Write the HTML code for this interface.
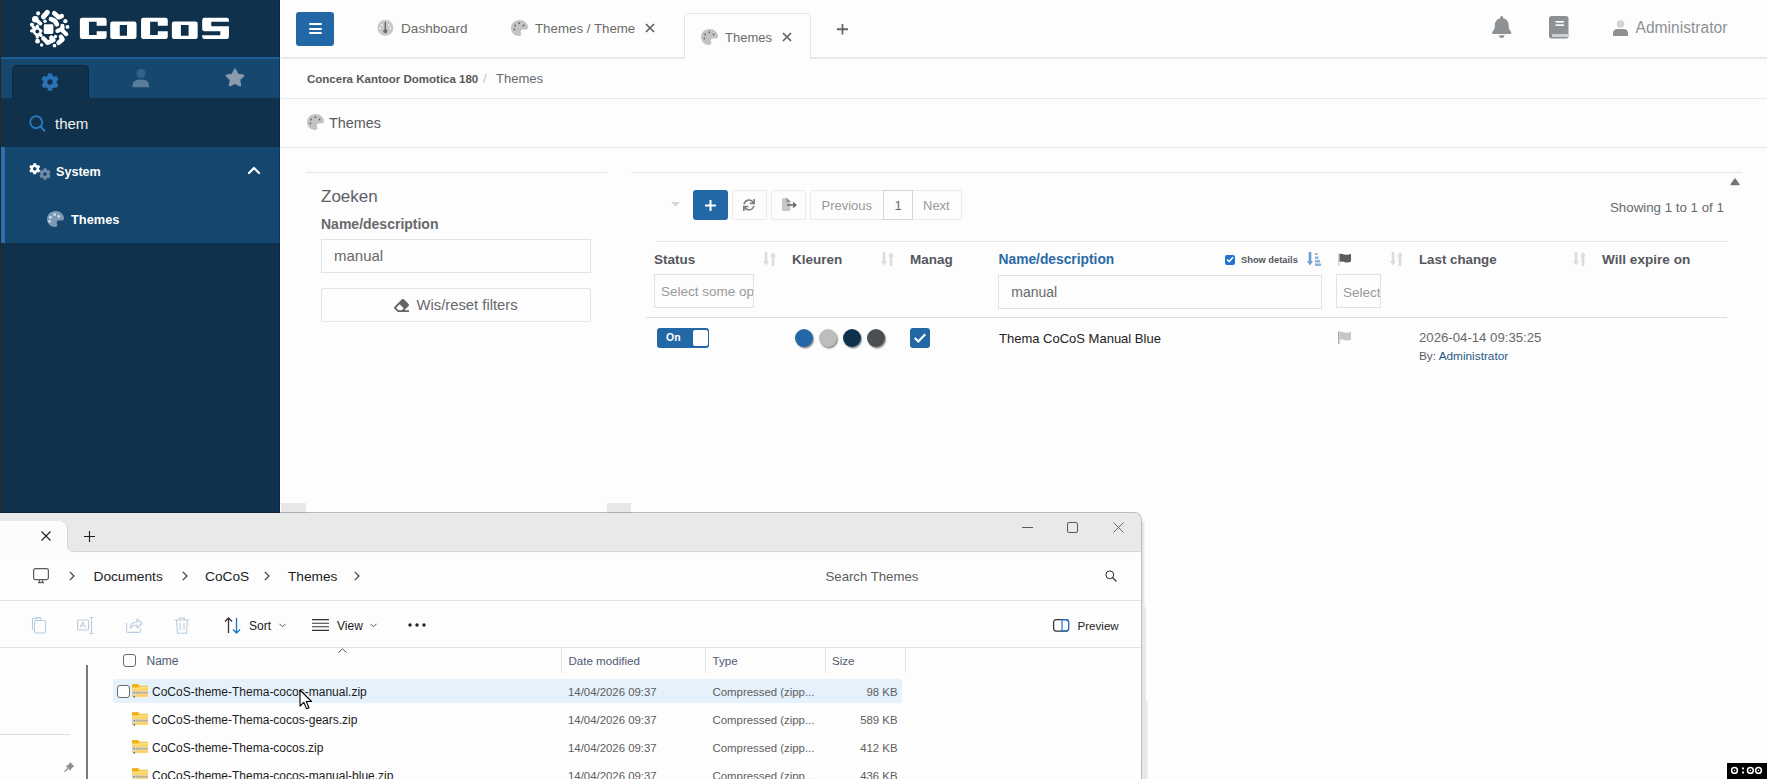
<!DOCTYPE html>
<html><head><meta charset="utf-8">
<style>
*{box-sizing:border-box;margin:0;padding:0}
html,body{width:1767px;height:779px;overflow:hidden;background:#fdfdfd;font-family:"Liberation Sans",sans-serif;position:relative}
.a{position:absolute}
.t{position:absolute;line-height:1;white-space:nowrap}
svg{position:absolute;overflow:visible}
</style></head><body>

<!-- ================= SIDEBAR ================= -->
<div class="a" style="left:0;top:0;width:280px;height:513px;background:#10314c"></div>
<div class="a" style="left:0;top:0;width:1px;height:513px;background:#2b2620"></div>
<!-- blue line + tab bar -->
<div class="a" style="left:1px;top:57px;width:279px;height:2px;background:#1f5f98"></div>
<div class="a" style="left:1px;top:59px;width:279px;height:39px;background:#15476f"></div>
<div class="a" style="left:12px;top:65px;width:77px;height:33px;background:#10314c;border-radius:5px 5px 0 0;border:1px solid #0c2740;border-bottom:none"></div>
<!-- menu area -->
<div class="a" style="left:1px;top:147px;width:279px;height:96px;background:#15466e"></div>
<div class="a" style="left:1px;top:147px;width:4px;height:96px;background:#2a6fb0"></div>


<!-- logo -->
<svg style="left:0;top:0" width="280" height="57">
 <g transform="translate(24,6) scale(0.0565)" fill="#fff" stroke="#fff" stroke-linecap="round" stroke-linejoin="round">
  <rect x="350" y="325" width="170" height="170" rx="24" stroke="none"/>
  <circle cx="250" cy="130" r="36" stroke="none"/>
  <line x1="345" y1="190" x2="412" y2="112" stroke-width="90"/>
  <path d="M535 128 L615 200 L668 178" fill="none" stroke-width="80"/>
  <circle cx="200" cy="235" r="58" stroke="none"/>
  <line x1="210" y1="240" x2="292" y2="312" stroke-width="66"/>
  <circle cx="372" cy="270" r="30" stroke="none"/>
  <path d="M478 232 L545 262 L582 322" fill="none" stroke-width="84"/>
  <circle cx="732" cy="268" r="37" stroke="none"/>
  <circle cx="140" cy="332" r="37" stroke="none"/>
  <circle cx="770" cy="370" r="34" stroke="none"/>
  <circle cx="235" cy="450" r="76" stroke="none"/>
  <path d="M135 440 L300 440 M235 355 L235 550 M165 375 L300 520" fill="none" stroke-width="58"/>
  <path d="M592 440 L680 402 M680 350 L680 432 L748 498" fill="none" stroke-width="74"/>
  <path d="M342 572 L420 652 L522 602 L482 560" fill="none" stroke-width="78"/>
  <circle cx="556" cy="540" r="30" stroke="none"/>
  <path d="M655 545 L682 592 L612 652" fill="none" stroke-width="80"/>
  <circle cx="240" cy="622" r="42" stroke="none"/>
  <circle cx="312" cy="690" r="30" stroke="none"/>
  <circle cx="540" cy="702" r="32" stroke="none"/>
 </g>
 <circle cx="37.3" cy="31.5" r="1.9" fill="#10314c"/>
 <g transform="translate(74,10) scale(0.0906)" fill="#fff" fill-rule="evenodd">
  <path d="M90 85 H335 Q360 85 360 110 V175 H250 V130 H165 V275 H250 V235 H360 V295 Q360 320 335 320 H90 Q65 320 65 295 V110 Q65 85 90 85 Z"/>
  <path d="M425 128 H665 Q690 128 690 153 V295 Q690 320 665 320 H425 Q400 320 400 295 V153 Q400 128 425 128 Z M505 165 V285 H585 V165 Z"/>
  <path d="M765 85 H1010 Q1035 85 1035 110 V175 H925 V130 H840 V275 H925 V235 H1035 V295 Q1035 320 1010 320 H765 Q740 320 740 295 V110 Q740 85 765 85 Z"/>
  <path d="M1105 128 H1340 Q1365 128 1365 153 V295 Q1365 320 1340 320 H1105 Q1080 320 1080 295 V153 Q1080 128 1105 128 Z M1180 165 V285 H1265 V165 Z"/>
  <path d="M1440 85 H1685 Q1710 85 1710 110 V130 H1515 V180 H1710 V295 Q1710 320 1685 320 H1440 Q1415 320 1415 295 V278 H1615 V235 H1440 Q1415 235 1415 210 V110 Q1415 85 1440 85 Z"/>
 </g>
</svg>
<!-- tab icons -->
<svg style="left:41px;top:73px" width="18" height="18" viewBox="0 0 512 512"><path fill="#2a72b5" d="M487.4 315.7l-42.6-24.6c4.3-23.2 4.3-47 0-70.2l42.6-24.6c4.9-2.8 7.1-8.6 5.5-14-11.1-35.6-30-67.8-54.7-94.6-3.8-4.1-10-5.1-14.8-2.3L380.8 110c-17.9-15.4-38.5-27.3-60.8-35.1V25.8c0-5.6-3.9-10.5-9.4-11.7-36.7-8.2-74.3-7.8-109.2 0-5.5 1.2-9.4 6.1-9.4 11.7V75c-22.2 7.9-42.8 19.8-60.8 35.1L88.7 85.5c-4.9-2.8-11-1.9-14.8 2.3-24.7 26.7-43.6 58.9-54.7 94.6-1.7 5.4.6 11.2 5.5 14L67.3 221c-4.3 23.2-4.3 47 0 70.2l-42.6 24.6c-4.9 2.8-7.1 8.6-5.5 14 11.1 35.6 30 67.8 54.7 94.6 3.8 4.1 10 5.1 14.8 2.3l42.6-24.6c17.9 15.4 38.5 27.3 60.8 35.1v49.2c0 5.6 3.9 10.5 9.4 11.7 36.7 8.2 74.3 7.8 109.2 0 5.5-1.2 9.4-6.1 9.4-11.7v-49.2c22.2-7.9 42.8-19.8 60.8-35.1l42.6 24.6c4.9 2.8 11 1.9 14.8-2.3 24.7-26.7 43.6-58.9 54.7-94.6 1.5-5.5-.7-11.3-5.6-14.1zM256 336c-44.1 0-80-35.9-80-80s35.9-80 80-80 80 35.9 80 80-35.9 80-80 80z"/></svg>
<svg style="left:132px;top:69px" width="17" height="19" viewBox="0 0 17 19"><circle cx="9" cy="4.5" r="4.6" fill="#33618a"/><path d="M0.5 18.3 V16.5 Q0.5 10.6 9 10.6 Q17 10.6 17 16.5 V18.3 Z" fill="#5b7d9a"/></svg>
<svg style="left:225px;top:68px" width="20" height="19" viewBox="0 0 576 512"><path fill="#8a9bb0" d="M259.3 17.8L194 150.2 47.9 171.5c-26.2 3.8-36.7 36.1-17.7 54.6l105.7 103-25 145.5c-4.5 26.1 23 46 46.4 33.7L288 439.6l130.7 68.7c23.4 12.2 50.9-7.6 46.4-33.7l-25-145.5 105.7-103c19-18.5 8.5-50.8-17.7-54.6L382 150.2 316.7 17.8c-11.7-23.6-45.6-23.9-57.4 0z"/></svg>
<!-- search -->
<svg style="left:28px;top:115px" width="18" height="18"><circle cx="8.2" cy="7.2" r="6" fill="none" stroke="#2a78c0" stroke-width="1.9"/><line x1="12.5" y1="11.5" x2="16.5" y2="15.8" stroke="#2a78c0" stroke-width="2.1" stroke-linecap="round"/></svg>
<div class="t" style="left:55px;top:116px;font-size:15px;color:#f2f2f2">them</div>
<!-- System -->
<svg style="left:29.3px;top:162.8px" width="11.5" height="11.5" viewBox="0 0 512 512"><path fill="#fff" d="M487.4 315.7l-42.6-24.6c4.3-23.2 4.3-47 0-70.2l42.6-24.6c4.9-2.8 7.1-8.6 5.5-14-11.1-35.6-30-67.8-54.7-94.6-3.8-4.1-10-5.1-14.8-2.3L380.8 110c-17.9-15.4-38.5-27.3-60.8-35.1V25.8c0-5.6-3.9-10.5-9.4-11.7-36.7-8.2-74.3-7.8-109.2 0-5.5 1.2-9.4 6.1-9.4 11.7V75c-22.2 7.9-42.8 19.8-60.8 35.1L88.7 85.5c-4.9-2.8-11-1.9-14.8 2.3-24.7 26.7-43.6 58.9-54.7 94.6-1.7 5.4.6 11.2 5.5 14L67.3 221c-4.3 23.2-4.3 47 0 70.2l-42.6 24.6c-4.9 2.8-7.1 8.6-5.5 14 11.1 35.6 30 67.8 54.7 94.6 3.8 4.1 10 5.1 14.8 2.3l42.6-24.6c17.9 15.4 38.5 27.3 60.8 35.1v49.2c0 5.6 3.9 10.5 9.4 11.7 36.7 8.2 74.3 7.8 109.2 0 5.5-1.2 9.4-6.1 9.4-11.7v-49.2c22.2-7.9 42.8-19.8 60.8-35.1l42.6 24.6c4.9 2.8 11 1.9 14.8-2.3 24.7-26.7 43.6-58.9 54.7-94.6 1.5-5.5-.7-11.3-5.6-14.1zM256 336c-44.1 0-80-35.9-80-80s35.9-80 80-80 80 35.9 80 80-35.9 80-80 80z"/></svg>
<svg style="left:39px;top:168px" width="12" height="12" viewBox="0 0 512 512"><path fill="#6f8ba5" d="M487.4 315.7l-42.6-24.6c4.3-23.2 4.3-47 0-70.2l42.6-24.6c4.9-2.8 7.1-8.6 5.5-14-11.1-35.6-30-67.8-54.7-94.6-3.8-4.1-10-5.1-14.8-2.3L380.8 110c-17.9-15.4-38.5-27.3-60.8-35.1V25.8c0-5.6-3.9-10.5-9.4-11.7-36.7-8.2-74.3-7.8-109.2 0-5.5 1.2-9.4 6.1-9.4 11.7V75c-22.2 7.9-42.8 19.8-60.8 35.1L88.7 85.5c-4.9-2.8-11-1.9-14.8 2.3-24.7 26.7-43.6 58.9-54.7 94.6-1.7 5.4.6 11.2 5.5 14L67.3 221c-4.3 23.2-4.3 47 0 70.2l-42.6 24.6c-4.9 2.8-7.1 8.6-5.5 14 11.1 35.6 30 67.8 54.7 94.6 3.8 4.1 10 5.1 14.8 2.3l42.6-24.6c17.9 15.4 38.5 27.3 60.8 35.1v49.2c0 5.6 3.9 10.5 9.4 11.7 36.7 8.2 74.3 7.8 109.2 0 5.5-1.2 9.4-6.1 9.4-11.7v-49.2c22.2-7.9 42.8-19.8 60.8-35.1l42.6 24.6c4.9 2.8 11 1.9 14.8-2.3 24.7-26.7 43.6-58.9 54.7-94.6 1.5-5.5-.7-11.3-5.6-14.1zM256 336c-44.1 0-80-35.9-80-80s35.9-80 80-80 80 35.9 80 80-35.9 80-80 80z"/></svg>
<div class="t" style="left:56px;top:166.3px;font-size:12.6px;font-weight:bold;color:#fff">System</div>
<svg style="left:247px;top:165px" width="14" height="10"><path d="M2 8 L7 3 L12 8" fill="none" stroke="#fff" stroke-width="2.2" stroke-linecap="round" stroke-linejoin="round"/></svg>
<!-- Themes menu item -->
<svg style="left:47px;top:210.5px" width="17" height="16" viewBox="0 0 17 16"><path fill="#7d9ab5" d="M8.5 0 C13.3 0 17 3.3 17 7.2 C17 9 15.6 9.6 14.2 9.6 L11.6 9.6 C10.2 9.6 9.4 11 9.9 12.2 C10.4 13.3 10.6 14.1 10 15 C9.5 15.8 8.8 16 8.2 16 C3.6 16 0 12.5 0 8 C0 3.6 3.8 0 8.5 0 Z"/><circle cx="2.6" cy="10.3" r="1.3" fill="#d9e2ea"/><circle cx="3.4" cy="6.2" r="1.3" fill="#d9e2ea"/><circle cx="7.6" cy="3.6" r="1.3" fill="#d9e2ea"/><circle cx="11.8" cy="5.4" r="1.3" fill="#d9e2ea"/></svg>
<div class="t" style="left:71px;top:213.8px;font-size:12.8px;font-weight:bold;color:#fff">Themes</div>

<!-- ================= MAIN ================= -->
<div class="a" style="left:280px;top:0;width:1px;height:513px;background:#fefefe"></div><div class="a" style="left:279px;top:0;width:1px;height:513px;background:rgba(0,30,70,.35)"></div>
<div class="a" style="left:281px;top:57px;width:1486px;height:2px;background:#e7e8e9"></div>
<div class="a" style="left:281px;top:98px;width:1486px;height:1px;background:#e8e9e9"></div>
<div class="a" style="left:281px;top:147px;width:1486px;height:1px;background:#e8e8e8"></div>


<!-- hamburger -->
<div class="a" style="left:296px;top:12px;width:38px;height:34px;background:#2268a6;border-radius:3px"></div>
<div class="a" style="left:308.5px;top:23.2px;width:13px;height:2.1px;background:#fff;border-radius:1px"></div>
<div class="a" style="left:308.5px;top:27.5px;width:13px;height:2.1px;background:#fff;border-radius:1px"></div>
<div class="a" style="left:308.5px;top:31.8px;width:13px;height:2.1px;background:#fff;border-radius:1px"></div>
<!-- dashboard tab -->
<svg style="left:377px;top:20px" width="17" height="17"><circle cx="8.4" cy="7.8" r="8" fill="#c8c8c8"/><rect x="7.6" y="2" width="1.4" height="9" fill="#6a6a6a"/><circle cx="8.3" cy="11.2" r="2" fill="#6a6a6a"/><rect x="4" y="4.5" width="1.5" height="1.3" fill="#fff"/><rect x="11" y="4.5" width="1.5" height="1.3" fill="#fff"/><rect x="2.6" y="7.5" width="1.4" height="1.6" fill="#fff"/><rect x="12.6" y="7.5" width="1.4" height="1.6" fill="#fff"/></svg>
<div class="t" style="left:401px;top:22.2px;font-size:13.6px;color:#6b6b6b">Dashboard</div>
<!-- themes/theme tab -->
<svg style="left:511px;top:20px" width="17" height="16" viewBox="0 0 17 16"><path fill="#c3c3c3" d="M8.5 0 C13.3 0 17 3.3 17 7.2 C17 9 15.6 9.6 14.2 9.6 L11.6 9.6 C10.2 9.6 9.4 11 9.9 12.2 C10.4 13.3 10.6 14.1 10 15 C9.5 15.8 8.8 16 8.2 16 C3.6 16 0 12.5 0 8 C0 3.6 3.8 0 8.5 0 Z"/><ellipse cx="8.4" cy="3.3" rx="0.75" ry="0.95" fill="#55575c"/><ellipse cx="4.1" cy="5.5" rx="0.75" ry="0.95" fill="#55575c"/><ellipse cx="12.6" cy="5.5" rx="0.75" ry="0.95" fill="#55575c"/><ellipse cx="3.3" cy="9.4" rx="0.75" ry="0.95" fill="#55575c"/></svg>
<div class="t" style="left:535px;top:21.8px;font-size:13.3px;color:#6b6b6b">Themes / Theme</div>
<svg style="left:644.5px;top:23px" width="10" height="10"><path d="M1 1 L9 9 M9 1 L1 9" stroke="#5f6063" stroke-width="1.7"/></svg>
<!-- active tab -->
<div class="a" style="left:684px;top:13px;width:127px;height:46px;background:#fdfdfd;border:1px solid #e3e5e7;border-bottom:none;border-radius:5px 5px 0 0"></div>
<svg style="left:701px;top:29px" width="17" height="16" viewBox="0 0 17 16"><path fill="#c3c3c3" d="M8.5 0 C13.3 0 17 3.3 17 7.2 C17 9 15.6 9.6 14.2 9.6 L11.6 9.6 C10.2 9.6 9.4 11 9.9 12.2 C10.4 13.3 10.6 14.1 10 15 C9.5 15.8 8.8 16 8.2 16 C3.6 16 0 12.5 0 8 C0 3.6 3.8 0 8.5 0 Z"/><ellipse cx="8.4" cy="3.3" rx="0.75" ry="0.95" fill="#55575c"/><ellipse cx="4.1" cy="5.5" rx="0.75" ry="0.95" fill="#55575c"/><ellipse cx="12.6" cy="5.5" rx="0.75" ry="0.95" fill="#55575c"/><ellipse cx="3.3" cy="9.4" rx="0.75" ry="0.95" fill="#55575c"/></svg>
<div class="t" style="left:725px;top:30.8px;font-size:13px;color:#6b6b6b">Themes</div>
<svg style="left:781.6px;top:31.5px" width="10" height="10"><path d="M1 1 L9 9 M9 1 L1 9" stroke="#5f6063" stroke-width="1.7"/></svg>
<svg style="left:837px;top:23.8px" width="11" height="10.5"><path d="M5.5 0 V10.5 M0 5.25 H11" stroke="#666" stroke-width="1.8"/></svg>
<!-- right icons -->
<svg style="left:1492px;top:15.5px" width="19.5" height="22" viewBox="0 0 448 512"><path fill="#8e9193" d="M224 512c35.32 0 63.97-28.65 63.97-64H160.03c0 35.35 28.65 64 63.97 64zm215.39-149.71c-19.32-20.76-55.47-51.99-55.47-154.29 0-77.7-54.480-139.9-127.94-155.16V32c0-17.67-14.32-32-31.98-32s-31.98 14.33-31.98 32v20.84C118.560 68.1 64.08 130.3 64.08 208c0 102.3-36.15 133.53-55.47 154.29-6 6.45-8.66 14.16-8.61 21.71.11 16.4 12.98 32 32.1 32h383.8c19.12 0 32-15.6 32.1-32 .05-7.55-2.61-15.27-8.61-21.71z"/></svg>
<svg style="left:1549px;top:15.5px" width="20" height="23"><rect x="0" y="0" width="19.5" height="22.5" rx="2.5" fill="#8e9193"/><rect x="3" y="18" width="16.5" height="3" fill="#cfd0d1"/><rect x="6.5" y="5" width="8.5" height="1.6" fill="#fff"/><rect x="6.5" y="8.3" width="8.5" height="1.6" fill="#fff"/></svg>
<svg style="left:1613px;top:20px" width="15" height="16"><circle cx="7.5" cy="4" r="3.8" fill="#d2d4d6"/><path d="M0 16 V13.5 Q0 9 4.5 9 H10.5 Q15 9 15 13.5 V16 Z" fill="#8e9193"/></svg>
<div class="t" style="left:1635.5px;top:19.8px;font-size:15.6px;color:#8e9193">Administrator</div>
<!-- breadcrumb -->
<div class="t" style="left:307px;top:73.5px;font-size:11.5px;font-weight:bold;color:#57595c">Concera Kantoor Domotica 180</div>
<div class="t" style="left:483px;top:72px;font-size:13px;color:#c4c4c4">/</div>
<div class="t" style="left:496px;top:72px;font-size:13px;color:#67696c">Themes</div>
<!-- page title -->
<svg style="left:307px;top:114px" width="17" height="16" viewBox="0 0 17 16"><path fill="#c3c3c3" d="M8.5 0 C13.3 0 17 3.3 17 7.2 C17 9 15.6 9.6 14.2 9.6 L11.6 9.6 C10.2 9.6 9.4 11 9.9 12.2 C10.4 13.3 10.6 14.1 10 15 C9.5 15.8 8.8 16 8.2 16 C3.6 16 0 12.5 0 8 C0 3.6 3.8 0 8.5 0 Z"/><ellipse cx="8.4" cy="3.3" rx="0.75" ry="0.95" fill="#55575c"/><ellipse cx="4.1" cy="5.5" rx="0.75" ry="0.95" fill="#55575c"/><ellipse cx="12.6" cy="5.5" rx="0.75" ry="0.95" fill="#55575c"/><ellipse cx="3.3" cy="9.4" rx="0.75" ry="0.95" fill="#55575c"/></svg>
<div class="t" style="left:329px;top:116px;font-size:14.4px;color:#57595c">Themes</div>


<!-- left card -->
<div class="a" style="left:306px;top:172px;width:301px;height:1px;background:#e6e6e6"></div>
<div class="t" style="left:321px;top:187.6px;font-size:17px;color:#5b6068">Zoeken</div>
<div class="t" style="left:321px;top:216.8px;font-size:14px;font-weight:bold;color:#67696c">Name/description</div>
<div class="a" style="left:321px;top:239px;width:270px;height:34px;border:1px solid #e2e2e2;background:#fdfdfd"></div>
<div class="t" style="left:334px;top:247.9px;font-size:15px;color:#67696c">manual</div>
<div class="a" style="left:321px;top:288px;width:270px;height:34px;border:1px solid #e4e4e4;background:#fdfdfd;border-radius:2px"></div>
<svg style="left:394px;top:298px" width="15" height="14" viewBox="0 0 512 480"><path fill="#626469" d="M497.941 273.941c18.745-18.745 18.745-49.137 0-67.882l-160-160c-18.745-18.745-49.136-18.746-67.883 0l-256 256c-18.745 18.745-18.745 49.137 0 67.882l96 96A48.004 48.004 0 0 0 144 480h356c6.627 0 12-5.373 12-12v-40c0-6.627-5.373-12-12-12H355.883l142.058-142.059zm-302.627-62.627l137.373 137.373L265.373 416H150.628l-80-80 124.686-124.686z"/></svg>
<div class="t" style="left:416.5px;top:297.5px;font-size:14.8px;color:#67696c">Wis/reset filters</div>

<!-- table card -->
<div class="a" style="left:631px;top:172px;width:1111px;height:1px;background:#e6e6e6"></div>
<svg style="left:1729.5px;top:177.5px" width="10" height="8"><path d="M1 6.6 L5 1 L9 6.6 Z" fill="#767676" stroke="#767676" stroke-width="1.3" stroke-linejoin="round"/></svg>
<svg style="left:671px;top:202px" width="9" height="5"><path d="M0 0 L4.5 4.5 L9 0 Z" fill="#d6d6d6"/></svg>
<div class="a" style="left:693px;top:190px;width:35px;height:30px;background:#2268a6;border-radius:3px"></div>
<svg style="left:704.5px;top:199.5px" width="11" height="11"><path d="M5.5 0 V11 M0 5.5 H11" stroke="#fff" stroke-width="2"/></svg>
<div class="a" style="left:732px;top:190px;width:35px;height:30px;border:1px solid #ebebeb;border-radius:2px"></div>
<svg style="left:743px;top:199px" width="12" height="12" viewBox="0 0 512 512"><path fill="#7b7d80" d="M440.65 12.57l4 82.77A247.16 247.16 0 0 0 255.83 8C134.73 8 33.91 94.92 12.29 209.82A12 12 0 0 0 24.09 224h49.05a12 12 0 0 0 11.67-9.26 175.910 175.91 0 0 1 317-56.94l-101.46-4.86a12 12 0 0 0-12.57 12v47.41a12 12 0 0 0 12 12H500a12 12 0 0 0 12-12V12a12 12 0 0 0-12-12h-47.37a12 12 0 0 0-11.98 12.570zM255.83 432a175.61 175.61 0 0 1-146-77.8l101.8 4.87a12 12 0 0 0 12.57-12v-47.4a12 12 0 0 0-12-12H12a12 12 0 0 0-12 12V500a12 12 0 0 0 12 12h47.35a12 12 0 0 0 12-12.6l-4.15-82.57A247.17 247.17 0 0 0 255.83 504c121.11 0 221.93-86.92 243.55-201.82a12 12 0 0 0-11.8-14.18h-49.05a12 12 0 0 0-11.67 9.26A175.86 175.86 0 0 1 255.83 432z"/></svg>
<div class="a" style="left:771px;top:190px;width:35px;height:30px;border:1px solid #ebebeb;border-radius:2px"></div>
<svg style="left:782px;top:198px" width="15" height="13"><path d="M0 1.5 Q0 0 1.5 0 H5.5 L8.5 3 V11.5 Q8.5 13 7 13 H1.5 Q0 13 0 11.5 Z" fill="#c7c7c7"/><path d="M4.5 0 L8.5 4 H4.5 Z" fill="#8a8a8a"/><path d="M5 7 H13.5 M11 4.5 L13.8 7 L11 9.5" fill="none" stroke="#5f6166" stroke-width="1.4"/></svg>
<div class="a" style="left:810px;top:190px;width:152px;height:30px;border:1px solid #ebebeb;border-radius:2px"></div>
<div class="a" style="left:883px;top:190px;width:30px;height:30px;border:1px solid #d4d4d4"></div>
<div class="t" style="left:821.5px;top:199px;font-size:13px;color:#9a9a9a">Previous</div>
<div class="t" style="left:894.5px;top:199px;font-size:13px;color:#67696c">1</div>
<div class="t" style="left:923px;top:199px;font-size:13px;color:#9a9a9a">Next</div>
<div class="t" style="left:1610px;top:200.8px;font-size:13.3px;color:#67696c">Showing 1 to 1 of 1</div>

<!-- headers -->
<div class="a" style="left:656px;top:241px;width:1071px;height:1px;background:#e6e6e6"></div>
<div class="t" style="left:654px;top:253px;font-size:13.5px;font-weight:bold;color:#55585d">Status</div>
<svg style="left:763px;top:251.5px" width="13" height="14"><path d="M3 0 V10" stroke="#dcdcdc" stroke-width="2.6"/><path d="M0 9 L3 13.5 L6 9 Z" fill="#dcdcdc"/><path d="M10 14 V4" stroke="#dcdcdc" stroke-width="2.6"/><path d="M7 4.5 L10 0 L13 4.5 Z" fill="#dcdcdc"/></svg>
<div class="t" style="left:792px;top:253px;font-size:13.5px;font-weight:bold;color:#55585d">Kleuren</div>
<svg style="left:881px;top:251.5px" width="13" height="14"><path d="M3 0 V10" stroke="#dcdcdc" stroke-width="2.6"/><path d="M0 9 L3 13.5 L6 9 Z" fill="#dcdcdc"/><path d="M10 14 V4" stroke="#dcdcdc" stroke-width="2.6"/><path d="M7 4.5 L10 0 L13 4.5 Z" fill="#dcdcdc"/></svg>
<div class="t" style="left:910px;top:253px;font-size:13.5px;font-weight:bold;color:#55585d">Manag</div>
<div class="t" style="left:998.5px;top:253px;font-size:13.8px;font-weight:bold;color:#2a6aa6">Name/description</div>
<div class="a" style="left:1225px;top:254.5px;width:10px;height:10px;background:#1f74d0;border-radius:2px"></div>
<svg style="left:1226px;top:256px" width="8" height="7"><path d="M1 3.5 L3.2 5.6 L7 1.2" fill="none" stroke="#fff" stroke-width="1.5"/></svg>
<div class="t" style="left:1241px;top:256.4px;font-size:9.3px;font-weight:bold;color:#55585d">Show details</div>
<svg style="left:1307px;top:251.5px" width="14" height="14"><path d="M3 0 V10" stroke="#6d9fd3" stroke-width="2.6"/><path d="M0 9 L3 13.5 L6 9 Z" fill="#6d9fd3"/><rect x="8" y="1" width="2.5" height="2" fill="#8fb4da"/><rect x="8" y="4.5" width="3.5" height="2.5" fill="#8fb4da"/><rect x="8" y="8" width="5" height="2.5" fill="#8fb4da"/><rect x="8" y="11.5" width="6" height="2.5" fill="#8fb4da"/></svg>
<svg style="left:1338px;top:252.5px" width="13" height="13" viewBox="0 0 512 512"><rect x="8" y="10" width="48" height="502" rx="10" fill="#c9c9c9"/><path fill="#5a5c61" d="M60 40 C150 10 230 60 300 70 C380 80 430 60 512 40 V330 C430 370 380 380 300 370 C230 360 150 320 60 350 Z"/></svg>
<svg style="left:1390px;top:251.5px" width="13" height="14"><path d="M3 0 V10" stroke="#dcdcdc" stroke-width="2.6"/><path d="M0 9 L3 13.5 L6 9 Z" fill="#dcdcdc"/><path d="M10 14 V4" stroke="#dcdcdc" stroke-width="2.6"/><path d="M7 4.5 L10 0 L13 4.5 Z" fill="#dcdcdc"/></svg>
<div class="t" style="left:1419px;top:253px;font-size:13.3px;font-weight:bold;color:#55585d">Last change</div>
<svg style="left:1573px;top:251.5px" width="13" height="14"><path d="M3 0 V10" stroke="#dcdcdc" stroke-width="2.6"/><path d="M0 9 L3 13.5 L6 9 Z" fill="#dcdcdc"/><path d="M10 14 V4" stroke="#dcdcdc" stroke-width="2.6"/><path d="M7 4.5 L10 0 L13 4.5 Z" fill="#dcdcdc"/></svg>
<div class="t" style="left:1602px;top:253px;font-size:13.6px;font-weight:bold;color:#55585d">Will expire on</div>
<!-- filters -->
<div class="a" style="left:654px;top:274px;width:100px;height:34px;border:1px solid #e2e2e2;background:#fdfdfd;overflow:hidden"><div class="t" style="left:6px;top:9.7px;font-size:13.5px;color:#9a9a9a">Select some options</div></div>
<div class="a" style="left:998px;top:275px;width:324px;height:34px;border:1px solid #e2e2e2;background:#fdfdfd"></div>
<div class="t" style="left:1011.3px;top:285.2px;font-size:14px;color:#67696c">manual</div>
<div class="a" style="left:1336px;top:274px;width:45px;height:34px;border:1px solid #e2e2e2;background:#fdfdfd;overflow:hidden"><div class="t" style="left:6px;top:10.5px;font-size:13.5px;color:#9a9a9a">Select some</div></div>
<div class="a" style="left:646px;top:317px;width:1081px;height:1px;background:#dedede"></div>

<!-- row -->
<div class="a" style="left:657px;top:328px;width:52px;height:20px;background:#2268a6;border-radius:3px"></div>
<div class="a" style="left:693px;top:330px;width:14.5px;height:16px;background:#fff;border-radius:2px"></div>
<div class="t" style="left:666px;top:332.4px;font-size:10.5px;font-weight:bold;color:#fff">On</div>
<div class="a" style="left:795px;top:329px;width:18px;height:18px;border-radius:50%;background:#2268a6;box-shadow:1px 1.5px 1.5px rgba(0,0,0,.45)"></div>
<div class="a" style="left:819px;top:329px;width:18px;height:18px;border-radius:50%;background:#bcbdbd;box-shadow:1px 1.5px 1.5px rgba(0,0,0,.45)"></div>
<div class="a" style="left:843px;top:329px;width:18px;height:18px;border-radius:50%;background:#10314c;box-shadow:1px 1.5px 1.5px rgba(0,0,0,.45)"></div>
<div class="a" style="left:867px;top:329px;width:18px;height:18px;border-radius:50%;background:#4b4e53;box-shadow:1px 1.5px 1.5px rgba(0,0,0,.45)"></div>
<div class="a" style="left:910px;top:328px;width:20px;height:20px;background:#2268a6;border-radius:3px"></div>
<svg style="left:913px;top:332px" width="14" height="12"><path d="M1.8 6 L5.3 9.5 L12.3 2.2" fill="none" stroke="#fff" stroke-width="2.2"/></svg>
<div class="t" style="left:999px;top:331.8px;font-size:13px;color:#222">Thema CoCoS Manual Blue</div>
<svg style="left:1338px;top:331px" width="13" height="13" viewBox="0 0 512 512"><rect x="8" y="10" width="48" height="502" rx="10" fill="#9a9a9a"/><path fill="#c6c6c6" d="M60 40 C150 10 230 60 300 70 C380 80 430 60 512 40 V330 C430 370 380 380 300 370 C230 360 150 320 60 350 Z"/></svg>
<div class="t" style="left:1419px;top:331.1px;font-size:13.2px;color:#67696c">2026-04-14 09:35:25</div>
<div class="t" style="left:1419px;top:350.9px;font-size:11.8px;color:#55595f">By: <span style="color:#2b5886">Administrator</span></div>

<!-- scroll bits above explorer -->
<div class="a" style="left:281px;top:503px;width:25px;height:10px;background:#e8e8e8"></div>
<div class="a" style="left:607px;top:503px;width:24px;height:10px;background:#e8e8e8"></div>

<!-- ================= EXPLORER ================= -->
<div class="a" style="left:0;top:513px;width:1141px;height:266px;background:#fdfdfd;border-radius:0 7px 0 0"></div>
<div class="a" style="left:0;top:512px;width:1142px;height:267px;border:1px solid rgba(0,0,0,.26);border-left:none;border-bottom:none;border-radius:0 8px 0 0"></div>
<svg style="left:1142px;top:521px" width="6" height="258"><path d="M0 0 H2.5 L2.5 85 L4 87 L4 180 L5.5 182 V258 H0 Z" fill="#e6e7e7"/></svg>
<div class="a" style="left:0;top:513px;width:1141px;height:38.5px;background:#e8eaea;border-radius:0 7px 0 0"></div>
<svg style="left:0;top:512px" width="1141" height="42"><path d="M0 9 H60 Q67.5 9 67.5 16.5 V33 Q67.5 39.5 74 39.5 H1141 V42 H0 Z" fill="#fcfcfc"/><path d="M62 9.3 Q67.5 10 67.5 16.5 V33 Q67.5 39.5 74 39.5 H1141" fill="none" stroke="#d6d7d7" stroke-width="1"/></svg>
<svg style="left:40.5px;top:531px" width="10" height="10"><path d="M0.5 0.5 L9.5 9.5 M9.5 0.5 L0.5 9.5" stroke="#1c1c1c" stroke-width="1.1"/></svg>
<svg style="left:84px;top:531px" width="11" height="11"><path d="M5.5 0 V11 M0 5.5 H11" stroke="#1c1c1c" stroke-width="1.1"/></svg>
<svg style="left:1022px;top:527px" width="11" height="1"><rect width="11" height="1" fill="#5a5a5a"/></svg>
<svg style="left:1067px;top:522px" width="11" height="11"><rect x="0.5" y="0.5" width="10" height="10" rx="1.5" fill="none" stroke="#5a5a5a" stroke-width="1"/></svg>
<svg style="left:1112.5px;top:521.5px" width="11" height="11"><path d="M0.5 0.5 L10.5 10.5 M10.5 0.5 L0.5 10.5" stroke="#5a5a5a" stroke-width="0.9"/></svg>
<!-- address -->
<svg style="left:33px;top:568px" width="16" height="16"><rect x="0.6" y="0.6" width="14.8" height="11" rx="1.8" fill="none" stroke="#5a5a5a" stroke-width="1.2"/><path d="M5 14.5 H11" stroke="#5a5a5a" stroke-width="1.4"/><path d="M6.5 12 V14 M9.5 12 V14" stroke="#5a5a5a" stroke-width="1"/></svg>
<svg style="left:68.5px;top:571px" width="6" height="10"><path d="M0.8 0.8 L5 5 L0.8 9.2" fill="none" stroke="#333" stroke-width="1.1"/></svg> <svg style="left:181.5px;top:571px" width="6" height="10"><path d="M0.8 0.8 L5 5 L0.8 9.2" fill="none" stroke="#333" stroke-width="1.1"/></svg> <svg style="left:264px;top:571px" width="6" height="10"><path d="M0.8 0.8 L5 5 L0.8 9.2" fill="none" stroke="#333" stroke-width="1.1"/></svg> <svg style="left:354px;top:571px" width="6" height="10"><path d="M0.8 0.8 L5 5 L0.8 9.2" fill="none" stroke="#333" stroke-width="1.1"/></svg>
<div class="t" style="left:93.5px;top:569.5px;font-size:13.7px;color:#1b1b1b">Documents</div>
<div class="t" style="left:205px;top:569.5px;font-size:13.7px;color:#1b1b1b">CoCoS</div>
<div class="t" style="left:288px;top:569.5px;font-size:13.7px;color:#1b1b1b">Themes</div>
<div class="t" style="left:825.5px;top:570.3px;font-size:13.2px;color:#5d5d5d">Search Themes</div>
<svg style="left:1105px;top:570px" width="12" height="12"><circle cx="4.8" cy="4.8" r="3.9" fill="none" stroke="#2a2a2a" stroke-width="1"/><path d="M7.6 7.6 L11 11" stroke="#2a2a2a" stroke-width="1.2" stroke-linecap="round"/></svg>
<div class="a" style="left:0;top:600px;width:1141px;height:1px;background:#e2e2e2"></div>
<!-- toolbar -->
<svg style="left:30px;top:617px" width="17" height="17"><rect x="4.5" y="3.5" width="11" height="12.5" rx="1.5" fill="none" stroke="#b9cde0" stroke-width="1.1"/><path d="M2.5 13 V3 Q2.5 1 4.5 1 H11" fill="none" stroke="#b9cde0" stroke-width="1.1"/><rect x="6" y="0.5" width="5" height="3" rx="1" fill="none" stroke="#b9cde0"/></svg>
<svg style="left:77px;top:617px" width="18" height="17"><rect x="0.6" y="3" width="11" height="10" rx="1.5" fill="none" stroke="#b9cde0" stroke-width="1.1"/><path d="M3 10.5 L5.8 4.8 L8.6 10.5 M4 8.5 H7.6" fill="none" stroke="#b9cde0" stroke-width="1"/><path d="M14.5 0.5 V16.5 M12.5 0.5 H16.5 M12.5 16.5 H16.5" stroke="#b9cde0" stroke-width="1.1"/></svg>
<svg style="left:126px;top:617px" width="17" height="16"><path d="M0.6 6 V14 Q0.6 15.4 2 15.4 H13 Q14.4 15.4 14.4 14 V11" fill="none" stroke="#b9cde0" stroke-width="1.1"/><path d="M4 11 Q5 5 11 5 V2 L16 6.5 L11 11 V8 Q7 8 4 11 Z" fill="none" stroke="#b9cde0" stroke-width="1.1" stroke-linejoin="round"/></svg>
<svg style="left:174px;top:617px" width="16" height="17"><path d="M0.5 3 H15.5 M5.5 3 V1 H10.5 V3 M2.5 3 L3.5 16.3 H12.5 L13.5 3 M6 6 V13 M10 6 V13" fill="none" stroke="#b9cde0" stroke-width="1.1"/></svg>
<svg style="left:224px;top:617px" width="18" height="17"><path d="M4.5 16 V1 M1 4.5 L4.5 1 L8 4.5" fill="none" stroke="#333" stroke-width="1.3"/><path d="M12.5 1 V16 M9 12.5 L12.5 16 L16 12.5" fill="none" stroke="#1d73c9" stroke-width="1.3"/></svg>
<div class="t" style="left:249px;top:620.3px;font-size:12px;color:#1b1b1b">Sort</div>
<svg style="left:278.5px;top:623px" width="7" height="5"><path d="M0.5 0.8 L3.5 3.8 L6.5 0.8" fill="none" stroke="#555" stroke-width="1"/></svg>
<svg style="left:312px;top:619px" width="18" height="13"><path d="M0 0.6 H17 M0 4.2 H17 M0 7.8 H17 M0 11.4 H17" stroke="#333" stroke-width="1.1"/></svg>
<div class="t" style="left:337px;top:620.3px;font-size:12px;color:#1b1b1b">View</div>
<svg style="left:369.5px;top:623px" width="7" height="5"><path d="M0.5 0.8 L3.5 3.8 L6.5 0.8" fill="none" stroke="#555" stroke-width="1"/></svg>
<svg style="left:408px;top:623px" width="18" height="4"><circle cx="2" cy="2" r="1.7" fill="#222"/><circle cx="9" cy="2" r="1.7" fill="#222"/><circle cx="16" cy="2" r="1.7" fill="#222"/></svg>
<svg style="left:1053px;top:619px" width="17" height="13"><rect x="0.6" y="0.6" width="15" height="11.5" rx="2.5" fill="none" stroke="#333" stroke-width="1.2"/><path d="M9 0.6 H13 Q15.6 0.6 15.6 3 V9.7 Q15.6 12.1 13 12.1 H9 Z" fill="none" stroke="#1d73c9" stroke-width="1.2"/></svg>
<div class="t" style="left:1077.5px;top:620.2px;font-size:11.6px;color:#1b1b1b">Preview</div>
<div class="a" style="left:0;top:647px;width:1141px;height:1px;background:#e2e2e2"></div>
<!-- nav pane -->
<div class="a" style="left:86px;top:665px;width:2px;height:114px;background:#7a7a7a"></div>
<div class="a" style="left:0;top:734px;width:70px;height:1px;background:#dcdcdc"></div>
<svg style="left:64px;top:761px" width="12" height="11"><path d="M6 1 L10.5 5.5 L9 6 L7 8 L6.8 10 L1.5 4.8 L3.5 4.6 L5.5 2.6 Z" fill="#8a8f96"/><path d="M4 7.5 L0.5 10.5" stroke="#8a8f96" stroke-width="1.3"/></svg>
<!-- header -->
<svg style="left:338px;top:648px" width="9" height="5"><path d="M0.5 4.5 L4.5 0.8 L8.5 4.5" fill="none" stroke="#555" stroke-width="1"/></svg>
<div class="a" style="left:123px;top:654px;width:13px;height:13px;border:1px solid #6a6a6a;border-radius:3px"></div>
<div class="t" style="left:146.5px;top:654.7px;font-size:12px;color:#4d5b72">Name</div>
<div class="a" style="left:561px;top:648px;width:1px;height:25px;background:#e5e5e5"></div>
<div class="a" style="left:705px;top:648px;width:1px;height:25px;background:#e5e5e5"></div>
<div class="a" style="left:825px;top:648px;width:1px;height:25px;background:#e5e5e5"></div>
<div class="a" style="left:905px;top:648px;width:1px;height:25px;background:#e5e5e5"></div>
<div class="t" style="left:568.4px;top:654.7px;font-size:11.6px;color:#4d5b72">Date modified</div>
<div class="t" style="left:712.5px;top:654.7px;font-size:11.6px;color:#4d5b72">Type</div>
<div class="t" style="left:832px;top:654.7px;font-size:11.6px;color:#4d5b72">Size</div>
<!-- rows -->
<div class="a" style="left:113px;top:679px;width:789px;height:24px;background:#e5f1fb;border-radius:3px"></div>
<div class="a" style="left:117px;top:685px;width:13px;height:13px;border:1px solid #6a6a6a;border-radius:3px;background:#fdfdfd"></div>
<svg style="left:132px;top:684px" width="16" height="14"><path d="M0 1 Q0 0 1 0 H5.8 L7.6 1.8 H15 Q16 1.8 16 2.8 V12 Q16 13 15 13 H1 Q0 13 0 12 Z" fill="#efb21b"/><path d="M0 4.2 Q0 3.6 0.6 3.6 H6.5 L8 2.6 H15.4 Q16 2.6 16 3.2 V12.2 Q16 13 15.2 13 H0.8 Q0 13 0 12.2 Z" fill="#fdd568"/><path d="M0.6 4.3 H6.6 L8.1 3.3 H15.4" fill="none" stroke="#fff0b8" stroke-width="0.6"/><rect x="0" y="7.3" width="16" height="2.8" fill="#cdcdcd"/><path d="M4.3 8.7 H15.6" stroke="#b08a2a" stroke-width="1.1" stroke-dasharray="1.1 0.9"/><rect x="1" y="7" width="2.6" height="6.6" rx="0.6" fill="#d6d6d6"/><rect x="1.7" y="8" width="1.2" height="1.2" fill="#666"/><rect x="1.6" y="12" width="1.4" height="1.4" fill="#6b5a2a"/></svg><div class="t" style="left:152px;top:686.3px;font-size:12px;color:#1b1b1b">CoCoS-theme-Thema-cocos-manual.zip</div><div class="t" style="left:568px;top:686.8px;font-size:11.4px;color:#5d5d5d">14/04/2026 09:37</div><div class="t" style="left:712.5px;top:686.8px;font-size:11.4px;color:#5d5d5d">Compressed (zipp...</div><div class="t" style="right:869.5px;top:686.8px;font-size:11.4px;color:#5d5d5d">98 KB</div><svg style="left:132px;top:712px" width="16" height="14"><path d="M0 1 Q0 0 1 0 H5.8 L7.6 1.8 H15 Q16 1.8 16 2.8 V12 Q16 13 15 13 H1 Q0 13 0 12 Z" fill="#efb21b"/><path d="M0 4.2 Q0 3.6 0.6 3.6 H6.5 L8 2.6 H15.4 Q16 2.6 16 3.2 V12.2 Q16 13 15.2 13 H0.8 Q0 13 0 12.2 Z" fill="#fdd568"/><path d="M0.6 4.3 H6.6 L8.1 3.3 H15.4" fill="none" stroke="#fff0b8" stroke-width="0.6"/><rect x="0" y="7.3" width="16" height="2.8" fill="#cdcdcd"/><path d="M4.3 8.7 H15.6" stroke="#b08a2a" stroke-width="1.1" stroke-dasharray="1.1 0.9"/><rect x="1" y="7" width="2.6" height="6.6" rx="0.6" fill="#d6d6d6"/><rect x="1.7" y="8" width="1.2" height="1.2" fill="#666"/><rect x="1.6" y="12" width="1.4" height="1.4" fill="#6b5a2a"/></svg><div class="t" style="left:152px;top:714.3px;font-size:12px;color:#1b1b1b">CoCoS-theme-Thema-cocos-gears.zip</div><div class="t" style="left:568px;top:714.8px;font-size:11.4px;color:#5d5d5d">14/04/2026 09:37</div><div class="t" style="left:712.5px;top:714.8px;font-size:11.4px;color:#5d5d5d">Compressed (zipp...</div><div class="t" style="right:869.5px;top:714.8px;font-size:11.4px;color:#5d5d5d">589 KB</div><svg style="left:132px;top:740px" width="16" height="14"><path d="M0 1 Q0 0 1 0 H5.8 L7.6 1.8 H15 Q16 1.8 16 2.8 V12 Q16 13 15 13 H1 Q0 13 0 12 Z" fill="#efb21b"/><path d="M0 4.2 Q0 3.6 0.6 3.6 H6.5 L8 2.6 H15.4 Q16 2.6 16 3.2 V12.2 Q16 13 15.2 13 H0.8 Q0 13 0 12.2 Z" fill="#fdd568"/><path d="M0.6 4.3 H6.6 L8.1 3.3 H15.4" fill="none" stroke="#fff0b8" stroke-width="0.6"/><rect x="0" y="7.3" width="16" height="2.8" fill="#cdcdcd"/><path d="M4.3 8.7 H15.6" stroke="#b08a2a" stroke-width="1.1" stroke-dasharray="1.1 0.9"/><rect x="1" y="7" width="2.6" height="6.6" rx="0.6" fill="#d6d6d6"/><rect x="1.7" y="8" width="1.2" height="1.2" fill="#666"/><rect x="1.6" y="12" width="1.4" height="1.4" fill="#6b5a2a"/></svg><div class="t" style="left:152px;top:742.3px;font-size:12px;color:#1b1b1b">CoCoS-theme-Thema-cocos.zip</div><div class="t" style="left:568px;top:742.8px;font-size:11.4px;color:#5d5d5d">14/04/2026 09:37</div><div class="t" style="left:712.5px;top:742.8px;font-size:11.4px;color:#5d5d5d">Compressed (zipp...</div><div class="t" style="right:869.5px;top:742.8px;font-size:11.4px;color:#5d5d5d">412 KB</div><svg style="left:132px;top:768px" width="16" height="14"><path d="M0 1 Q0 0 1 0 H5.8 L7.6 1.8 H15 Q16 1.8 16 2.8 V12 Q16 13 15 13 H1 Q0 13 0 12 Z" fill="#efb21b"/><path d="M0 4.2 Q0 3.6 0.6 3.6 H6.5 L8 2.6 H15.4 Q16 2.6 16 3.2 V12.2 Q16 13 15.2 13 H0.8 Q0 13 0 12.2 Z" fill="#fdd568"/><path d="M0.6 4.3 H6.6 L8.1 3.3 H15.4" fill="none" stroke="#fff0b8" stroke-width="0.6"/><rect x="0" y="7.3" width="16" height="2.8" fill="#cdcdcd"/><path d="M4.3 8.7 H15.6" stroke="#b08a2a" stroke-width="1.1" stroke-dasharray="1.1 0.9"/><rect x="1" y="7" width="2.6" height="6.6" rx="0.6" fill="#d6d6d6"/><rect x="1.7" y="8" width="1.2" height="1.2" fill="#666"/><rect x="1.6" y="12" width="1.4" height="1.4" fill="#6b5a2a"/></svg><div class="t" style="left:152px;top:770.3px;font-size:12px;color:#1b1b1b">CoCoS-theme-Thema-cocos-manual-blue.zip</div><div class="t" style="left:568px;top:770.8px;font-size:11.4px;color:#5d5d5d">14/04/2026 09:37</div><div class="t" style="left:712.5px;top:770.8px;font-size:11.4px;color:#5d5d5d">Compressed (zipp...</div><div class="t" style="right:869.5px;top:770.8px;font-size:11.4px;color:#5d5d5d">436 KB</div>
<!-- cursor -->
<svg style="left:299px;top:689px" width="14" height="22"><path d="M1 1 V17 L4.8 13.4 L7.6 19.8 L10 18.8 L7.3 12.5 H12.5 Z" fill="#fff" stroke="#000" stroke-width="1.1" stroke-linejoin="round"/></svg>

<!-- timestamp -->
<div class="a" style="left:1727px;top:763px;width:40px;height:16px;background:#000"></div><svg style="left:0;top:0" width="1767" height="779"><ellipse cx="1734.5" cy="770.4" rx="2.9" ry="2.9" fill="none" stroke="#fff" stroke-width="1.5"/><circle cx="1734.5" cy="770.4" r="0.7" fill="#fff"/><rect x="1742" y="767.5" width="2" height="1.8" fill="#fff"/><rect x="1742" y="771.6" width="2" height="1.8" fill="#fff"/><ellipse cx="1750.4" cy="770.4" rx="2.9" ry="2.9" fill="none" stroke="#fff" stroke-width="1.5"/><circle cx="1750.4" cy="770.4" r="0.7" fill="#fff"/><ellipse cx="1758.5" cy="770.4" rx="2.9" ry="2.9" fill="none" stroke="#fff" stroke-width="1.5"/><circle cx="1758.5" cy="770.4" r="0.7" fill="#fff"/></svg>
</body></html>
